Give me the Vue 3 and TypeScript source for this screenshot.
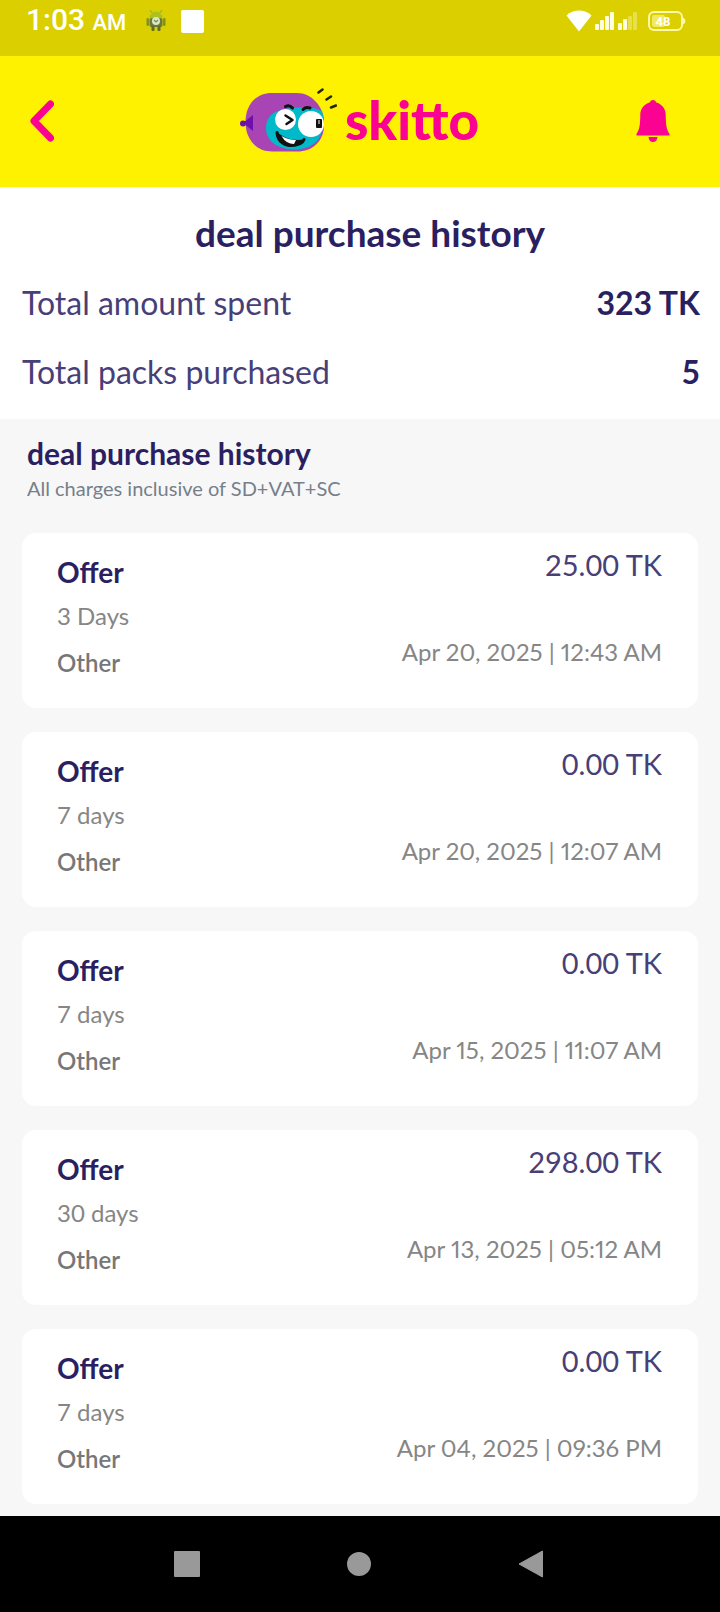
<script setup lang="ts">
interface Purchase {
  id: number
  title: string
  validity: string
  category: string
  amount: string
  date: string
}

interface SummaryRow {
  label: string
  value: string
}

const summary: SummaryRow[] = [
  { label: 'Total amount spent', value: '323 TK' },
  { label: 'Total packs purchased', value: '5' },
]

const purchases: Purchase[] = [
  { id: 1, title: 'Offer', validity: '3 Days', category: 'Other', amount: '25.00 TK', date: 'Apr 20, 2025 | 12:43 AM' },
  { id: 2, title: 'Offer', validity: '7 days', category: 'Other', amount: '0.00 TK', date: 'Apr 20, 2025 | 12:07 AM' },
  { id: 3, title: 'Offer', validity: '7 days', category: 'Other', amount: '0.00 TK', date: 'Apr 15, 2025 | 11:07 AM' },
  { id: 4, title: 'Offer', validity: '30 days', category: 'Other', amount: '298.00 TK', date: 'Apr 13, 2025 | 05:12 AM' },
  { id: 5, title: 'Offer', validity: '7 days', category: 'Other', amount: '0.00 TK', date: 'Apr 04, 2025 | 09:36 PM' },
]
</script>

<template>
  <div class="screen">
    <div class="status-bar">
      <div class="status-left">
        <span class="clock">1:03 <span class="meridiem">AM</span></span>
        <svg class="robot" width="20" height="24" viewBox="0 0 20 24" aria-hidden="true">
          <path d="M4 1l3 4M16 1l-3 4" stroke="#8fa63a" stroke-width="1" />
          <path d="M3.500 9a6.500 6.500 0 0 1 13 0z" fill="#a9c21c" />
          <rect x="3.500" y="9" width="13" height="9" rx="2" fill="#6d7a36" />
          <rect x="0.500" y="9" width="2.500" height="8" rx="1.200" fill="#7f9222" />
          <rect x="17" y="9" width="2.500" height="8" rx="1.200" fill="#7f9222" />
          <rect x="5.500" y="17" width="3" height="5" rx="1" fill="#5f6b2a" />
          <rect x="11.500" y="17" width="3" height="5" rx="1" fill="#5f6b2a" />
          <circle cx="10" cy="12" r="4" fill="#dfe7c4" />
          <path d="M8 11l2 2 2-2" fill="none" stroke="#7b8b50" stroke-width="1.200" />
        </svg>
        <span class="notice"></span>
      </div>
      <div class="status-right">
        <svg width="26" height="22" viewBox="0 0 26 22" aria-hidden="true">
          <path d="M0.500 5.500C7-1.200 19-1.200 25.500 5.500L13 21.500z" fill="#fff" />
        </svg>
        <svg width="43" height="18" viewBox="0 0 43 18" aria-hidden="true">
          <g fill="#fffde0">
            <rect x="0" y="12" width="4" height="6" rx="1" />
            <rect x="5" y="8" width="4" height="10" rx="1" />
            <rect x="10" y="4" width="4" height="14" rx="1" />
            <rect x="15" y="0" width="4" height="18" rx="1" />
            <rect x="23" y="11" width="4" height="7" rx="1" />
            <rect x="28" y="7" width="4" height="11" rx="1" />
            <rect x="33" y="4" width="4" height="14" rx="1" opacity="0.350" />
            <rect x="38" y="0" width="4" height="18" rx="1" opacity="0.350" />
          </g>
        </svg>
        <svg class="battery" width="38" height="20" viewBox="0 0 38 20" role="img" aria-label="Battery 48%">
          <rect x="1" y="1" width="33" height="18" rx="5" fill="none" stroke="#fff9a8" stroke-width="2" />
          <rect x="4" y="4" width="13" height="12" rx="2" fill="#fff9a8" opacity="0.600" />
          <path d="M35 6.500q2.500 1 2.500 3.500t-2.500 3.500z" fill="#fff9a8" />
          <text x="15" y="14.500" text-anchor="middle" class="battery-text">48</text>
        </svg>
      </div>
    </div>

    <header class="app-bar">
      <button class="icon-button back" type="button" aria-label="Back">
        <svg width="24" height="42" viewBox="0 0 24 42" aria-hidden="true">
          <path d="M20.500 4L4 21 20.500 38" fill="none" stroke="#fb0292" stroke-width="7" stroke-linecap="round" stroke-linejoin="round" />
        </svg>
      </button>
      <a class="brand" href="#" aria-label="skitto">
        <svg width="98" height="68" viewBox="0 0 98 68" aria-hidden="true">
          <circle cx="4" cy="35.500" r="3" fill="#6d10ab" />
          <path d="M33 5h25c15 0 25 13 27 26v8C84 53 74 63.500 58 63.500H33C16 63.500 6.500 50 6.500 34S16 5 33 5z" fill="#a844b3" />
          <path d="M14 27v16L4 35z" fill="#6d10ab" />
          <path d="M42 22c8-3 34-4 41 1 4 16 0 37-25 38.500C40 62 27 54 27 40c0-9 5-16 15-18z" fill="#00b9c9" />
          <circle cx="46.500" cy="31.500" r="10.500" fill="#fff" />
          <circle cx="72" cy="36" r="13" fill="#fff" />
          <path d="M46.500 18.500q4-2 7 1.500" fill="none" stroke="#111" stroke-width="3" stroke-linecap="round" />
          <path d="M64 21.500q3-3 7-1.500" fill="none" stroke="#111" stroke-width="3" stroke-linecap="round" />
          <path d="M46.500 27.500L53.500 32 47.500 36" fill="none" stroke="#111" stroke-width="2.500" stroke-linecap="round" stroke-linejoin="round" />
          <rect x="77" y="31" width="6" height="9" rx="1" fill="#111" />
          <rect x="79.500" y="32" width="1" height="4" fill="#fff" />
          <path d="M38 44c8 7 17 9 27 7.500-2 9-22 10-27-1z" fill="#111" />
          <path d="M38 44.500q1 11 13 13 12 0 14-6" fill="none" stroke="#111" stroke-width="3" stroke-linecap="round" />
          <path d="M42.500 48q7 4 14.500 4l-2 4q-8 0-12.500-8z" fill="#fff" />
          <path d="M79.500 4.500L83.500 1.500M87.500 11.500L92 8.500M92 19.500L97 17.500" stroke="#222300" stroke-width="2.500" stroke-linecap="round" />
        </svg>
        <span class="brand-name">skitto</span>
      </a>
      <button class="icon-button bell" type="button" aria-label="Notifications">
        <svg width="34" height="42" viewBox="0 0 34 42" aria-hidden="true">
          <path d="M17 0a3.300 3.300 0 0 1 3.300 2.500C26.500 4.500 29.700 9 29.700 15c.1 10 .8 14.500 3.800 19v1.500H.5V34c3-4.500 3.700-9 3.800-19C4.300 9 7.500 4.500 13.700 2.500A3.300 3.300 0 0 1 17 0zM12.500 37h9q-.5 5-4.500 5t-4.500-5z" fill="#fb0292" />
        </svg>
      </button>
    </header>

    <section class="summary">
      <h1>deal purchase history</h1>
      <dl>
        <div v-for="row in summary" :key="row.label" class="summary-row">
          <dt>{{ row.label }}</dt>
          <dd>{{ row.value }}</dd>
        </div>
      </dl>
    </section>

    <main class="history">
      <h2>deal purchase history</h2>
      <p class="note">All charges inclusive of SD+VAT+SC</p>
      <ul>
        <li v-for="item in purchases" :key="item.id" class="card">
          <div class="details">
            <h3>{{ item.title }}</h3>
            <p class="validity">{{ item.validity }}</p>
            <p class="category">{{ item.category }}</p>
          </div>
          <div class="payment">
            <p class="amount">{{ item.amount }}</p>
            <time class="date">{{ item.date }}</time>
          </div>
        </li>
      </ul>
    </main>

    <nav class="system-nav" aria-label="System">
      <button type="button" aria-label="Recent apps">
        <svg width="26" height="26" viewBox="0 0 26 26"><rect width="26" height="26" rx="1" fill="#999" /></svg>
      </button>
      <button type="button" aria-label="Home">
        <svg width="26" height="26" viewBox="0 0 26 26"><circle cx="13" cy="13" r="12" fill="#999" /></svg>
      </button>
      <button type="button" aria-label="Back">
        <svg width="26" height="28" viewBox="0 0 26 28"><path d="M24.500 1v26L1 14z" fill="#999" stroke="#999" stroke-linejoin="round" /></svg>
      </button>
    </nav>
  </div>
</template>

<style>
body {
  margin: 0;
  background: #f8f7f8;
}
</style>

<style scoped>
.screen {
  display: flex;
  flex-direction: column;
  min-height: 100vh;
  font-family: Lato, "Liberation Sans", sans-serif;
  color: #2a1f60;
}

h1,
h2,
h3,
p,
dl,
dd,
ul {
  margin: 0;
  padding: 0;
}

button {
  display: flex;
  align-items: center;
  justify-content: center;
  padding: 0;
  border: 0;
  background: none;
}

svg {
  display: block;
}

.status-bar {
  display: flex;
  justify-content: space-between;
  align-items: flex-start;
  height: 56px;
  padding: 0 34px 0 26px;
  box-sizing: border-box;
  background: #dbcf00;
  color: #fff;
  font-family: Roboto, sans-serif;
}

.status-left,
.status-right {
  display: flex;
  align-items: center;
  height: 42px;
}

.clock {
  font-size: 30px;
  font-weight: 500;
  line-height: 44px;
}

.meridiem {
  font-size: 22px;
}

.robot {
  margin-left: 20px;
}

.notice {
  width: 23px;
  height: 23px;
  margin-left: 15px;
  border-radius: 2px;
  background: #fff;
}

.status-right {
  gap: 3px;
}

.battery {
  margin-left: 7px;
}

.battery-text {
  fill: #fff;
  font-size: 13px;
  font-weight: 700;
}

.app-bar {
  display: flex;
  align-items: center;
  justify-content: space-between;
  height: 131px;
  padding: 0 40px 2px 30px;
  box-sizing: border-box;
  background: #fff200;
}

.icon-button {
  width: 54px;
  height: 60px;
}

.back {
  width: 62px;
  justify-content: flex-start;
}

.brand {
  display: flex;
  align-items: center;
  gap: 8px;
  padding-top: 3px;
  color: #fb0292;
  text-decoration: none;
}

.brand-name {
  padding-bottom: 4px;
  font-size: 53px;
  font-weight: 900;
  line-height: 60px;
}

.summary {
  padding: 22px 20px 0 22px;
  background: #fff;
}

h1 {
  margin-bottom: 24px;
  padding-left: 18px;
  font-size: 37px;
  font-weight: 700;
  line-height: 48px;
  text-align: center;
}

.summary-row {
  display: flex;
  justify-content: space-between;
  padding-bottom: 25px;
  font-size: 32px;
  line-height: 44px;
}

dt {
  color: #483f78;
}

dd {
  font-weight: 700;
}

.history {
  flex: 1;
  padding: 15px 22px 11px;
  background: #f8f7f8;
}

h2 {
  padding-left: 5px;
  font-size: 30px;
  font-weight: 700;
  line-height: 38px;
}

.note {
  padding-left: 5px;
  color: #75808a;
  font-size: 20px;
  line-height: 32px;
}

ul {
  display: flex;
  flex-direction: column;
  gap: 24px;
  margin-top: 29px;
  list-style: none;
}

.card {
  display: flex;
  justify-content: space-between;
  padding: 12px 36px 22px 35px;
  border-radius: 14px;
  background: #fff;
}

.details {
  padding-top: 7px;
}

h3 {
  font-size: 28px;
  font-weight: 700;
  line-height: 40px;
}

.validity,
.category,
.date {
  color: #868686;
  font-size: 24px;
  line-height: 47px;
}

.category {
  color: #777;
  font-weight: 600;
}

.payment {
  text-align: right;
}

.amount {
  margin-bottom: 43px;
  color: #483f78;
  font-size: 29px;
  line-height: 40px;
}

.date {
  display: block;
  font-variant-numeric: proportional-nums;
}

.system-nav {
  display: flex;
  justify-content: center;
  align-items: center;
  gap: 112px;
  height: 96px;
  padding-right: 2px;
  background: #000;
}

.system-nav button {
  width: 60px;
  height: 60px;
}
</style>
